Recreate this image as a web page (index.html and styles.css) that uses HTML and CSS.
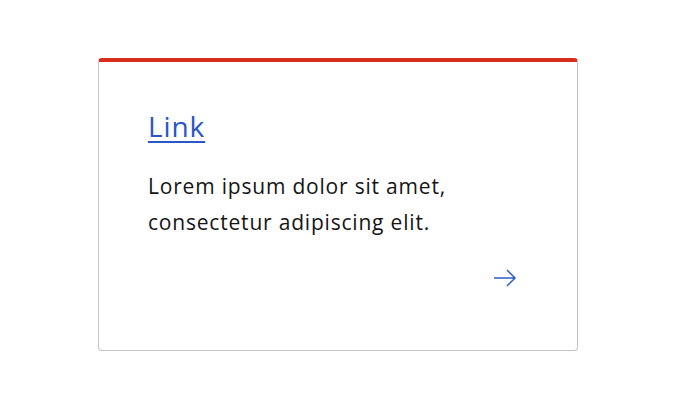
FILE: index.html
```html
<!DOCTYPE html>
<html lang="en">
<head>
  <meta charset="UTF-8">
  <title>Card</title>
  <link rel="stylesheet" href="styles.css">
</head>
<body>
  <div class="card">
    <a class="card-title" href="#">Link</a>
    <p class="card-text">Lorem ipsum dolor sit amet, consectetur adipiscing elit.</p>
    <div class="card-footer">
      <svg class="arrow" width="24" height="24" viewBox="0 0 24 24" fill="none" stroke="#2b5dc8" stroke-width="1.5">
        <path d="M1 12h21M14 4l8 8-8 8"/>
      </svg>
    </div>
  </div>
</body>
</html>
```

FILE: styles.css
```css
* {
  box-sizing: border-box;
  margin: 0;
  padding: 0;
}

body {
  background: #fff;
  font-family: 'Open Sans', 'Noto Sans', sans-serif;
  padding: 58px 0 0 98px;
}

.card {
  width: 480px;
  height: 293px;
  border: 1px solid #c4c4c4;
  border-top: 4px solid #d92d1c;
  border-radius: 4px;
  padding: 46px 48px 48px 49px;
  display: flex;
  flex-direction: column;
}

.card-title {
  font-size: 28px;
  font-weight: 500;
  letter-spacing: 0.9px;
  line-height: 36px;
  color: #2a56c6;
  text-decoration: underline;
  text-underline-offset: 4px;
  text-decoration-thickness: 2px;
  align-self: flex-start;
  margin-bottom: 24px;
}

.card-text {
  font-size: 21px;
  letter-spacing: 0.8px;
  line-height: 36px;
  color: #151515;
  width: 340px;
}

.card-footer {
  display: flex;
  justify-content: flex-end;
  margin-top: 26px;
  padding-right: 12px;
}
```
